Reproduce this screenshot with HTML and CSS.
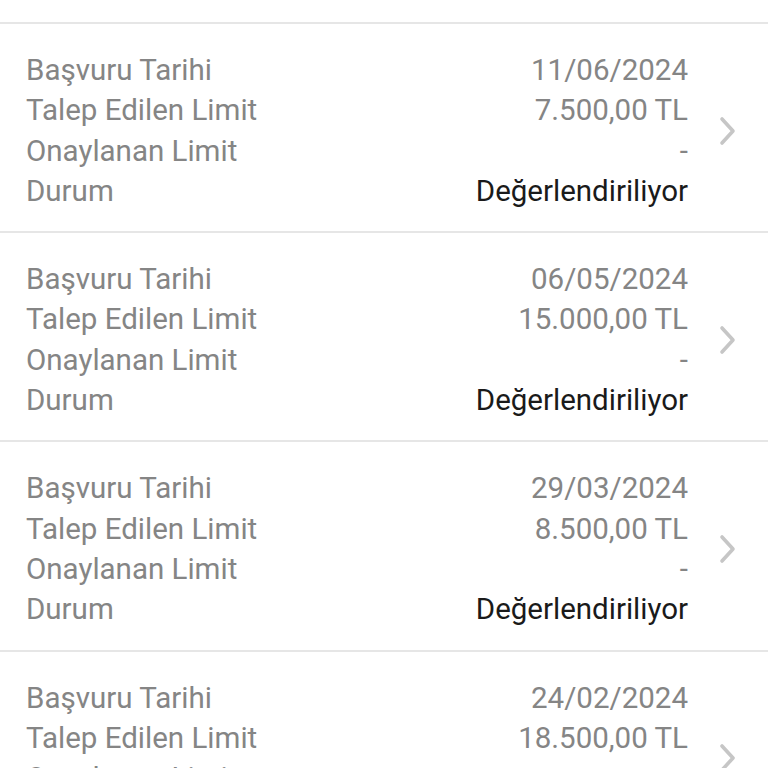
FILE: index.html
```html
<!DOCTYPE html>
<html lang="tr">
<head>
    <meta charset="UTF-8">
    <meta name="viewport" content="width=device-width, initial-scale=1.0">
    <title>Limit Başvurularım</title>
    <link rel="stylesheet" href="styles.css">
</head>
<body>
    <div class="top-space"></div>
    <div class="list">
        <div class="item">
            <div class="rows">
                <div class="row"><span class="label">Başvuru Tarihi</span><span class="value">11/06/2024</span></div>
                <div class="row"><span class="label">Talep Edilen Limit</span><span class="value">7.500,00 TL</span></div>
                <div class="row"><span class="label">Onaylanan Limit</span><span class="value">-</span></div>
                <div class="row"><span class="label">Durum</span><span class="value status">Değerlendiriliyor</span></div>
            </div>
            <div class="arrow">
                <svg width="18" height="30" viewBox="0 0 18 30"><path d="M3 3 L14 15 L3 27" fill="none" stroke="#c6c6c6" stroke-width="3.6" stroke-linecap="round" stroke-linejoin="round"/></svg>
            </div>
        </div>
        <div class="item">
            <div class="rows">
                <div class="row"><span class="label">Başvuru Tarihi</span><span class="value">06/05/2024</span></div>
                <div class="row"><span class="label">Talep Edilen Limit</span><span class="value">15.000,00 TL</span></div>
                <div class="row"><span class="label">Onaylanan Limit</span><span class="value">-</span></div>
                <div class="row"><span class="label">Durum</span><span class="value status">Değerlendiriliyor</span></div>
            </div>
            <div class="arrow">
                <svg width="18" height="30" viewBox="0 0 18 30"><path d="M3 3 L14 15 L3 27" fill="none" stroke="#c6c6c6" stroke-width="3.6" stroke-linecap="round" stroke-linejoin="round"/></svg>
            </div>
        </div>
        <div class="item">
            <div class="rows">
                <div class="row"><span class="label">Başvuru Tarihi</span><span class="value">29/03/2024</span></div>
                <div class="row"><span class="label">Talep Edilen Limit</span><span class="value">8.500,00 TL</span></div>
                <div class="row"><span class="label">Onaylanan Limit</span><span class="value">-</span></div>
                <div class="row"><span class="label">Durum</span><span class="value status">Değerlendiriliyor</span></div>
            </div>
            <div class="arrow">
                <svg width="18" height="30" viewBox="0 0 18 30"><path d="M3 3 L14 15 L3 27" fill="none" stroke="#c6c6c6" stroke-width="3.6" stroke-linecap="round" stroke-linejoin="round"/></svg>
            </div>
        </div>
        <div class="item">
            <div class="rows">
                <div class="row"><span class="label">Başvuru Tarihi</span><span class="value">24/02/2024</span></div>
                <div class="row"><span class="label">Talep Edilen Limit</span><span class="value">18.500,00 TL</span></div>
                <div class="row"><span class="label">Onaylanan Limit</span><span class="value">-</span></div>
                <div class="row"><span class="label">Durum</span><span class="value status">Değerlendiriliyor</span></div>
            </div>
            <div class="arrow">
                <svg width="18" height="30" viewBox="0 0 18 30"><path d="M3 3 L14 15 L3 27" fill="none" stroke="#c6c6c6" stroke-width="3.6" stroke-linecap="round" stroke-linejoin="round"/></svg>
            </div>
        </div>
    </div>
</body>
</html>
```

FILE: styles.css
```css
body {
    font-family: Roboto, "Noto Sans", sans-serif;
    background-color: #ffffff;
    margin: 0;
    padding: 0;
    overflow: hidden;
    height: 768px;
}

.top-space {
    height: 22px;
}

.item {
    display: flex;
    align-items: center;
    border-top: 2px solid #e6e6e6;
    padding: 26px 0 20px 26px;
}

.rows {
    flex: 1;
}

.row {
    display: flex;
    justify-content: space-between;
    font-size: 29.5px;
    line-height: 40.3px;
    height: 40.3px;
}

.label {
    color: #858585;
}

.value {
    color: #858585;
}

.value.status {
    color: #1a1a1a;
}

.arrow {
    width: 80px;
    display: flex;
    justify-content: center;
}
```
